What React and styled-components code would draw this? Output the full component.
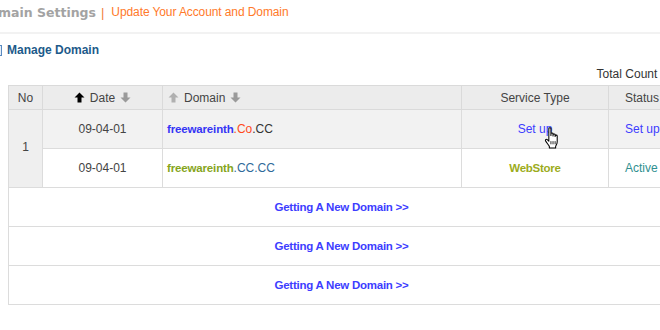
import React from "react";
import styled, { createGlobalStyle } from "styled-components";

const GlobalStyle = createGlobalStyle`
  html, body {
    margin: 0;
    padding: 0;
    background: #fff;
    overflow: hidden;
  }
  body {
    font-family: "Liberation Sans", Arial, sans-serif;
    font-size: 12px;
    color: #333;
  }
`;

const Page = styled.div`
  width: 660px;
  height: 330px;
  overflow: hidden;
`;

const TitleBar = styled.div`
  display: flex;
  align-items: center;
  height: 24px;
  border-bottom: 2px solid #f2f2f2;
  margin-left: -21px;
  padding-bottom: 8px;
`;

const PageTitle = styled.span`
  font-family: "DejaVu Sans", Verdana, sans-serif;
  font-weight: bold;
  font-size: 12.5px;
  color: #a3a3a3;
`;

const Sep = styled.span`
  color: #f08040;
  font-size: 13px;
  margin: 0 7px 0 5px;
`;

const SubTitle = styled.span`
  color: #ff7a2a;
  font-size: 12px;
  letter-spacing: -0.1px;
`;

const SectionHead = styled.div`
  display: flex;
  align-items: center;
  gap: 5px;
  margin: 8px 0 0 -7px;
  height: 16px;
  font-weight: bold;
  font-size: 12px;
  color: #1d5a8a;
`;

const Marker = styled.span`
  width: 7px;
  height: 9px;
  border: 1px solid #5a8ac0;
  background: #e6eef8;
`;

const TotalRow = styled.div`
  width: 674px;
  text-align: right;
  margin-top: 9px;
  height: 15px;
  color: #333;
`;

const Table = styled.table`
  margin: 3px 0 0 8px;
  width: 666px;
  border-collapse: collapse;
  table-layout: fixed;
  border: 1px solid #d6d6d6;
`;

const Th = styled.th`
  height: 23px;
  padding: 0;
  background: #ececec;
  border: 1px solid #dadada;
  font-weight: normal;
  color: #444;
  white-space: nowrap;
  text-align: ${(p) => p.$align || "center"};
  padding-left: ${(p) => p.$pad || 0}px;
`;

const Td = styled.td`
  height: 38px;
  padding: 0;
  border: 1px solid #dcdcdc;
  background: ${(p) => (p.$shade ? "#f2f2f2" : "#fff")};
  text-align: ${(p) => p.$align || "center"};
  padding-left: ${(p) => p.$pad || 0}px;
  white-space: nowrap;
  color: #444;
`;

const NoCell = styled(Td)`
  background: #efefef;
  vertical-align: top;
  padding-top: 30px;
  height: auto;
`;

const SortArrow = styled.svg`
  width: 11px;
  height: 11px;
  vertical-align: -1px;
  margin: 0 5px;
`;

const Name = styled.span`
  font-weight: bold;
  font-size: 11.5px;
  letter-spacing: -0.15px;
  color: ${(p) => p.$color};
`;

const Ext = styled.span`
  color: ${(p) => p.$color};
`;

const Link = styled.span`
  color: ${(p) => p.$color || "#3d3dff"};
  font-weight: ${(p) => (p.$bold ? "bold" : "normal")};
  font-size: ${(p) => (p.$bold ? "11.5px" : "12px")};
  letter-spacing: ${(p) => (p.$bold ? "-0.25px" : "0")};
`;

const CursorWrap = styled.span`
  position: relative;
  display: inline-block;
`;

const Hand = styled.svg`
  position: absolute;
  left: 26px;
  top: 5px;
  width: 17px;
  height: 22px;
`;

const Arrow = ({ up, color }) => (
  <SortArrow viewBox="0 0 11 11">
    {up ? (
      <path d="M5.5 0.5 L10.5 5.5 L7.5 5.5 L7.5 10.5 L3.5 10.5 L3.5 5.5 L0.5 5.5 Z" fill={color} />
    ) : (
      <path d="M3.5 0.5 L7.5 0.5 L7.5 5.5 L10.5 5.5 L5.5 10.5 L0.5 5.5 L3.5 5.5 Z" fill={color} />
    )}
  </SortArrow>
);

const HandCursor = () => (
  <Hand viewBox="0 0 16 21">
    <path
      d="M4.5 1.5 C4.5 0.5 6.5 0.5 6.5 1.5 L6.5 8 L6.5 6.5 C6.5 5.5 8.5 5.5 8.5 6.5 L8.5 8.5 L8.5 7.5 C8.5 6.5 10.5 6.5 10.5 7.5 L10.5 9 L10.5 8.5 C10.5 7.5 12.5 7.5 12.5 8.5 L12.5 14 C12.5 16 11.5 17 11 18.5 L11 20 L5 20 L5 18.5 C4 17 2.5 15 1.5 13.5 C0.8 12.5 1.8 11 3 12 L4.5 13.5 Z"
      fill="#fff"
      stroke="#000"
      strokeWidth="1"
      strokeLinejoin="round"
    />
    <path d="M6.5 13.5 V16.5 M8.5 13.5 V16.5 M10.5 13.5 V16.5" stroke="#000" strokeWidth="0.8" />
  </Hand>
);

const newRows = [1, 2, 3];

export default function App() {
  return (
    <Page>
      <GlobalStyle />
      <TitleBar>
        <PageTitle>Domain Settings</PageTitle>
        <Sep>|</Sep>
        <SubTitle>Update Your Account and Domain</SubTitle>
      </TitleBar>
      <SectionHead>
        <Marker />
        Manage Domain
      </SectionHead>
      <TotalRow>Total Count : 2</TotalRow>
      <Table>
        <colgroup>
          <col style={{ width: 34 }} />
          <col style={{ width: 120 }} />
          <col style={{ width: 299 }} />
          <col style={{ width: 147 }} />
          <col style={{ width: 66 }} />
        </colgroup>
        <thead>
          <tr>
            <Th>No</Th>
            <Th>
              <Arrow up color="#000" />
              Date
              <Arrow color="#9a9a9a" />
            </Th>
            <Th $align="left">
              <Arrow up color="#b0b0b0" />
              Domain
              <Arrow color="#9a9a9a" />
            </Th>
            <Th>Service Type</Th>
            <Th $align="left" $pad={16}>Status</Th>
          </tr>
        </thead>
        <tbody>
          <tr>
            <NoCell rowSpan={2}>1</NoCell>
            <Td $shade>09-04-01</Td>
            <Td $shade $align="left" $pad={4}>
              <Name $color="#3535f5">freewareinth</Name>
              <Ext $color="#ff4a1a">.Co</Ext>
              <Ext $color="#333">.CC</Ext>
            </Td>
            <Td $shade>
              <CursorWrap>
                <Link>Set up</Link>
                <HandCursor />
              </CursorWrap>
            </Td>
            <Td $shade $align="left" $pad={16}>
              <Link>Set up</Link>
            </Td>
          </tr>
          <tr>
            <Td>09-04-01</Td>
            <Td $align="left" $pad={4}>
              <Name $color="#86a51c">freewareinth</Name>
              <Ext $color="#2f6a9a">.CC.CC</Ext>
            </Td>
            <Td>
              <Link $bold $color="#9cac1c">WebStore</Link>
            </Td>
            <Td $align="left" $pad={16}>
              <Link $color="#2f9090">Active</Link>
            </Td>
          </tr>
          {newRows.map((n) => (
            <tr key={n}>
              <Td colSpan={5}>
                <Link $bold>Getting A New Domain &gt;&gt;</Link>
              </Td>
            </tr>
          ))}
        </tbody>
      </Table>
    </Page>
  );
}
